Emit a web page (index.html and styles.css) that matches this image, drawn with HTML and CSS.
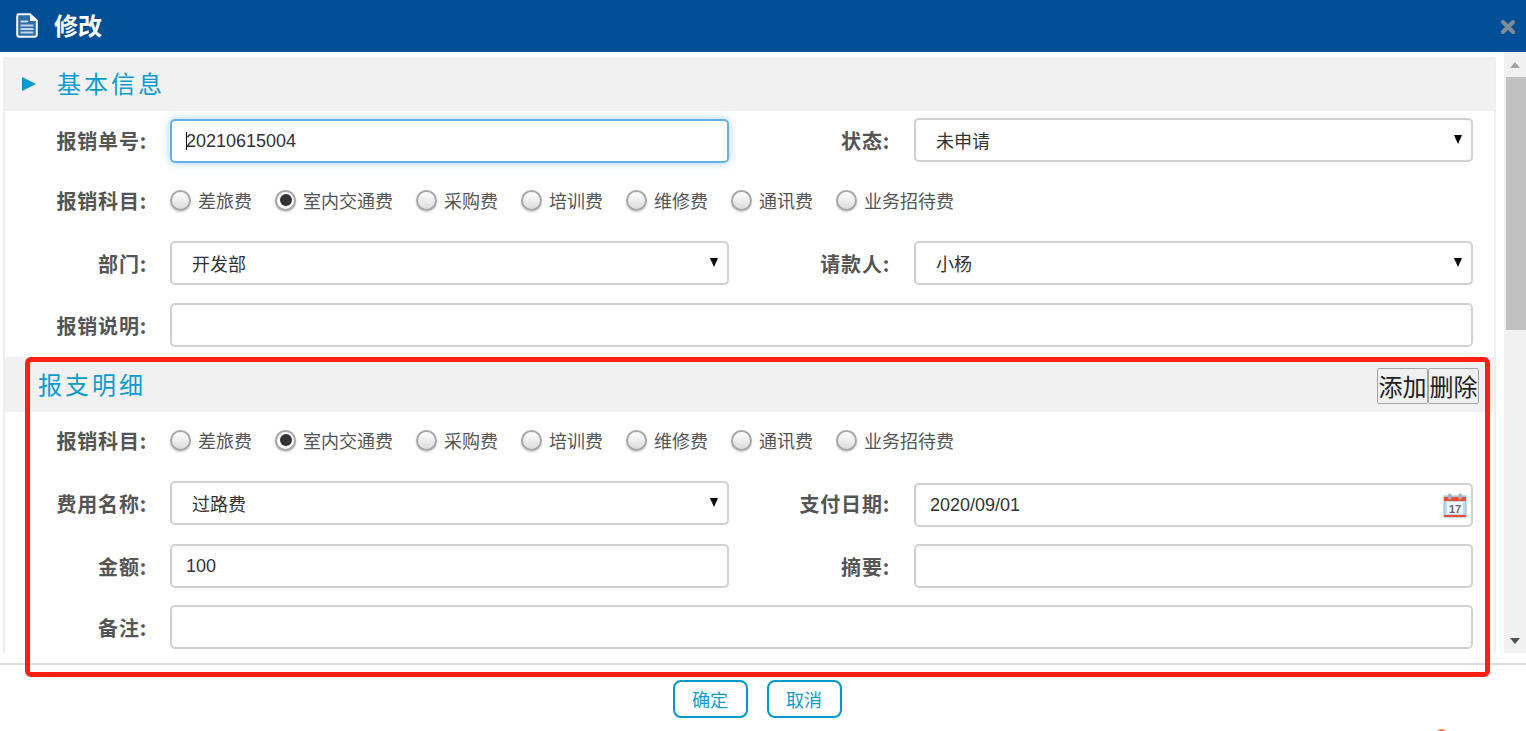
FILE: index.html
```html
<!DOCTYPE html>
<html lang="zh-CN">
<head>
<meta charset="utf-8">
<title>修改</title>
<link rel="stylesheet" href="styles.css">
</head>
<body>
<div class="dialog">
  <header class="topbar">
    <svg class="doc-icon" width="22" height="25" viewBox="0 0 22 25">
      <path d="M3 1.2H14L20.8 7.5V21.5Q20.8 23.8 18.5 23.8H3.5Q1.2 23.8 1.2 21.5V3.5Q1.2 1.2 3 1.2Z" fill="#2f6ba6" stroke="#f4f8fb" stroke-width="2"/>
      <path d="M14 1.5V8H20.5Z" fill="#fff"/>
      <path d="M4.5 8.5H12M4.5 12.5H17.5M4.5 16H17.5M4.5 19.5H17.5" stroke="#c4d6e6" stroke-width="1.8" fill="none"/>
    </svg>
    <h1 class="topbar-title">修改</h1>
    <svg class="close-icon" width="16" height="16" viewBox="0 0 16 16">
      <path d="M3 3L13 13M13 3L3 13" stroke="#7f8c96" stroke-width="4" stroke-linecap="round"/>
    </svg>
  </header>

  <main class="body">
    <div class="panel">
      <section>
        <div class="sec-head sec-head-first">
          <span class="tri"></span>
          <h2 class="sec-title">基本信息</h2>
        </div>
        <div class="row row-first">
          <label class="lbl">报销单号:</label>
          <div class="caret-wrap"><input class="field field-focus" type="text" value="20210615004"><span class="caret"></span></div>
          <label class="lbl lbl2">状态:</label>
          <div class="sel-wrap"><select class="field sel"><option>未申请</option></select></div>
        </div>
        <div class="row row-radio-a">
          <label class="lbl">报销科目:</label>
          <div class="radios">
            <span class="radio-item"><span class="radio"></span>差旅费</span>
            <span class="radio-item"><span class="radio on"></span>室内交通费</span>
            <span class="radio-item"><span class="radio"></span>采购费</span>
            <span class="radio-item"><span class="radio"></span>培训费</span>
            <span class="radio-item"><span class="radio"></span>维修费</span>
            <span class="radio-item"><span class="radio"></span>通讯费</span>
            <span class="radio-item"><span class="radio"></span>业务招待费</span>
          </div>
        </div>
        <div class="row">
          <label class="lbl">部门:</label>
          <div class="sel-wrap"><select class="field sel"><option>开发部</option></select></div>
          <label class="lbl lbl2">请款人:</label>
          <div class="sel-wrap"><select class="field sel"><option>小杨</option></select></div>
        </div>
        <div class="row row-gap">
          <label class="lbl">报销说明:</label>
          <input class="field field-wide" type="text">
        </div>
      </section>

      <section>
        <div class="sec-head sec-head-second">
          <h2 class="sec-title sec-title-b">报支明细</h2>
          <div class="head-btns">
            <button class="mini-btn" type="button">添加</button><button class="mini-btn" type="button">删除</button>
          </div>
        </div>
        <div class="row row-radio-b">
          <label class="lbl">报销科目:</label>
          <div class="radios">
            <span class="radio-item"><span class="radio"></span>差旅费</span>
            <span class="radio-item"><span class="radio on"></span>室内交通费</span>
            <span class="radio-item"><span class="radio"></span>采购费</span>
            <span class="radio-item"><span class="radio"></span>培训费</span>
            <span class="radio-item"><span class="radio"></span>维修费</span>
            <span class="radio-item"><span class="radio"></span>通讯费</span>
            <span class="radio-item"><span class="radio"></span>业务招待费</span>
          </div>
        </div>
        <div class="row">
          <label class="lbl">费用名称:</label>
          <div class="sel-wrap"><select class="field sel"><option>过路费</option></select></div>
          <label class="lbl lbl2">支付日期:</label>
          <div class="date-wrap">
            <input class="field" type="text" value="2020/09/01">
            <svg class="cal-icon" width="24" height="25" viewBox="0 0 24 25">
              <rect x="1" y="3" width="22" height="21" fill="#bcd9f4" stroke="#8fb9e0"/>
              <rect x="4" y="9" width="16" height="12" fill="#f4f8fc"/>
              <rect x="1" y="4" width="22" height="4" fill="#e8502f"/>
              <rect x="1" y="22" width="22" height="2" fill="#e8502f"/>
              <rect x="5" y="0.5" width="3.5" height="6" rx="1.7" fill="#a9b0b6"/>
              <rect x="15.5" y="0.5" width="3.5" height="6" rx="1.7" fill="#a9b0b6"/>
              <text x="12" y="19.5" class="cal-num" text-anchor="middle">17</text>
            </svg>
          </div>
        </div>
        <div class="row row-amount">
          <label class="lbl">金额:</label>
          <input class="field" type="text" value="100">
          <label class="lbl lbl2">摘要:</label>
          <input class="field" type="text">
        </div>
        <div class="row row-note">
          <label class="lbl">备注:</label>
          <input class="field field-wide" type="text">
        </div>
      </section>
    </div>
    <div class="scrollbar">
      <span class="arrow-up"></span>
      <span class="thumb"></span>
      <span class="arrow-down"></span>
    </div>
  </main>

  <footer class="foot">
    <button class="act-btn" type="button">确定</button>
    <button class="act-btn" type="button">取消</button>
  </footer>
</div>
<div class="annot"></div>
<div class="speck"></div>
</body>
</html>
```
FILE: styles.css
```css
* { box-sizing: border-box; }
html, body { margin: 0; padding: 0; height: 731px; overflow: hidden; background: #fff; }
body { font-family: "Liberation Sans", "Noto Sans CJK SC", sans-serif; position: relative; }

.dialog { width: 1526px; height: 731px; display: flex; flex-direction: column; }

.topbar { height: 52px; flex: none; background: #034f96; display: flex; align-items: center; padding: 0 10px 0 16px; }
.doc-icon { flex: none; margin-top: -2px; }
.topbar-title { margin: 0 0 2px 16px; font-size: 24px; line-height: 30px; font-weight: 700; color: #fff; font-family: "Noto Sans CJK SC", sans-serif; }
.close-icon { margin-left: auto; margin-top: 1px; margin-right: 0; }

.body { height: 611px; flex: none; display: flex; align-items: flex-start; }
.panel { width: 1493px; height: 596px; margin: 5px 8px 0 3px; border: 2px solid #eee; border-bottom: 0; border-radius: 3px 3px 0 0; overflow: hidden; flex: none; }

.sec-head { background: #f1f1f1; display: flex; align-items: center; margin-top: -2px; }
.sec-head-first { height: 54px; padding-left: 17px; }
.sec-head-second { height: 55px; margin-top: 10px; padding-left: 33px; padding-right: 15px; }
.tri { width: 0; height: 0; border-left: 14px solid #0099cc; border-top: 7.5px solid transparent; border-bottom: 7.5px solid transparent; margin-right: 21px; }
.sec-title { margin: 0 0 2px; font-size: 24px; font-weight: 400; letter-spacing: 3px; color: #0d9bce; font-family: "Noto Sans CJK SC", sans-serif; line-height: 30px; }
.sec-title-b { margin: 0 0 2px; }
.head-btns { margin-left: auto; display: flex; margin-top: 2px; }
.mini-btn { width: 51px; height: 36px; padding: 0; font-size: 24px; line-height: 30px; color: #222; background: #f0f0f0; border: 1px solid #a5a5a5; border-radius: 2px; font-family: "Noto Sans CJK SC", sans-serif; }

.row { display: flex; align-items: center; gap: 23px; height: 44px; }
.row-first { margin-top: 7px; height: 45px; align-items: flex-start; }
.row-radio-a { height: 22px; margin-top: 26px; margin-bottom: 30px; }
.row-gap { margin-top: 18px; }
.row-radio-b { height: 22px; margin-top: 17px; margin-bottom: 30px; }
.row-amount { margin-top: 19px; }
.row-note { margin-top: 17px; }

.lbl { width: 142px; flex: none; align-self: center; text-align: right; font-size: 20px; font-weight: 700; letter-spacing: 0.8px; color: #555; line-height: 24px; padding-top: 1px; white-space: nowrap; font-family: "Noto Sans CJK SC", sans-serif; }
.lbl2 { width: 138px; margin-right: 1px; }

.field { width: 559px; height: 44px; flex: none; display: block; border: 2px solid #d0d0d0; border-radius: 5px; background: #fff; padding: 0 14px; font-size: 18px; color: #333; outline: 0; font-family: "Liberation Sans", "Noto Sans CJK SC", sans-serif; }
.field-wide { width: 1303px; }
.field-focus { border-color: #66afe9; box-shadow: 0 0 8px rgba(102, 175, 233, 0.6); }
.caret-wrap { position: relative; margin-top: 1px; flex: none; }
.caret { position: absolute; left: 16px; top: 13px; width: 1px; height: 18px; background: #000; }
.sel-wrap { position: relative; flex: none; }
.sel { appearance: none; -webkit-appearance: none; padding-left: 20px; padding-top: 4px; }
.sel-wrap::after { content: ""; position: absolute; right: 11px; top: 17px; border-top: 9px solid #000; border-left: 4.5px solid transparent; border-right: 4.5px solid transparent; }

.date-wrap { position: relative; flex: none; margin-top: 4px; }
.cal-icon { position: absolute; right: 6px; top: 10px; }
.cal-num { font-size: 11px; font-weight: 700; fill: #5f6a75; font-family: "Liberation Sans", sans-serif; }

.radios { display: flex; gap: 23px; }
.radio-item { display: flex; align-items: center; gap: 7px; font-size: 18px; line-height: 22px; color: #555; font-family: "Noto Sans CJK SC", sans-serif; }
.radio { width: 21px; height: 21px; border-radius: 50%; flex: none; border: 2px solid #a8a8a8; background: linear-gradient(#fff, #dcdcdc); box-shadow: 0 1px 2px rgba(0, 0, 0, 0.25); position: relative; }
.radio.on { background: #fff; }
.radio.on::after { content: ""; position: absolute; left: 2.5px; top: 2.5px; width: 12px; height: 12px; border-radius: 50%; background: #333; }

.scrollbar { width: 22px; height: 601px; flex: none; background: #f1f1f1; display: flex; flex-direction: column; align-items: flex-end; position: relative; }
.thumb { width: 20px; height: 253px; background: #c1c1c1; margin-top: 25px; }
.arrow-up, .arrow-down { position: absolute; left: 6px; width: 0; height: 0; border-left: 5.5px solid transparent; border-right: 5.5px solid transparent; }
.arrow-up { top: 10px; border-bottom: 6px solid #a3a3a3; }
.arrow-down { top: 586px; border-top: 6px solid #505050; }

.foot { flex: 1; border-top: 2px solid #ddd; display: flex; justify-content: center; align-items: flex-start; gap: 19px; padding-top: 15px; padding-right: 12px; }
.act-btn { width: 75px; height: 38px; padding: 0; background: #fff; border: 2px solid #0099cc; border-radius: 8px; color: #0d9bce; font-size: 18px; line-height: 24px; font-family: "Noto Sans CJK SC", sans-serif; }

.annot { position: absolute; left: 25px; top: 357px; width: 1465px; height: 320px; border: 5px solid #ff2014; border-radius: 6px; pointer-events: none; }
.speck { position: absolute; left: 1436px; top: 729px; width: 11px; height: 11px; border-radius: 50%; background: #ff7a3c; }
```
